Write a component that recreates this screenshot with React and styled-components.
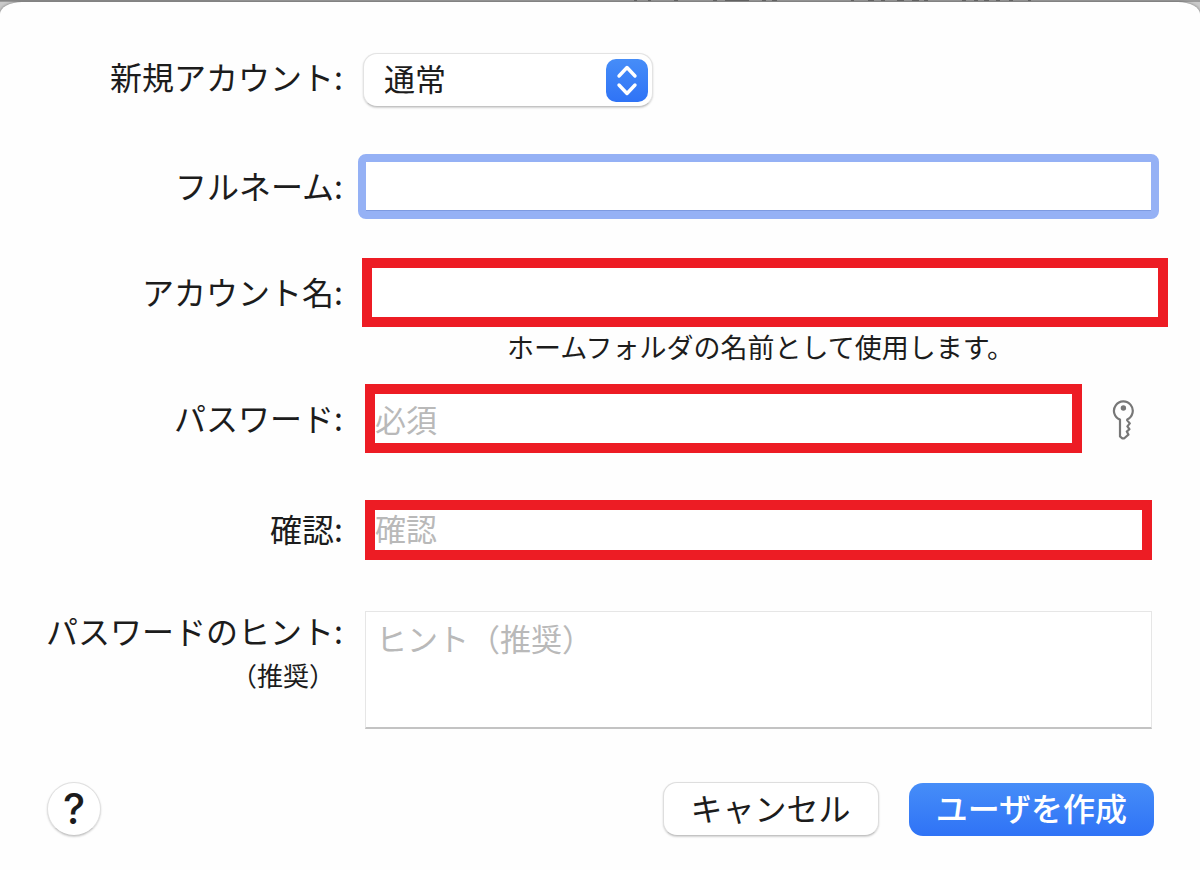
import React from "react";
import styled, { createGlobalStyle, css } from "styled-components";

const GlobalStyle = createGlobalStyle`
  * {
    box-sizing: border-box;
  }
  body {
    margin: 0;
    background-color: #fff;
    font-family: "Noto Sans CJK JP", "Noto Sans", sans-serif;
    color: #1c1c1c;
  }
  input,
  select,
  textarea,
  button {
    font-family: inherit;
    font-size: 31px;
    color: inherit;
    margin: 0;
  }
`;

const Backdrop = styled.div`
  background: linear-gradient(#cacaca, #cacaca 40px, #fff 40px);
`;

const WindowEdge = styled.svg`
  display: block;
  width: 100%;
  height: 2px;
  background-color: #9b9b9b;
`;

const Sheet = styled.form`
  display: flex;
  flex-flow: column nowrap;
  min-height: calc(100vh - 2px);
  padding: 51px 48px 34px 0;
  background-color: #fefefe;
  border-radius: 22px 22px 0 0 / 12px 12px 0 0;
  box-shadow: 0 0 3px rgba(0, 0, 0, 0.45);
`;

const Row = styled.div`
  display: grid;
  grid-template-columns: 343px minmax(0, 1fr);
  column-gap: 22px;
  align-items: ${({ $top }) => ($top ? "start" : "center")};
  margin-top: ${({ $space }) => $space || 0}px;
`;

const Label = styled.label`
  padding-bottom: ${({ $raised }) => ($raised ? 8 : 4)}px;
  font-size: 32px;
  line-height: 38px;
  text-align: right;
  white-space: nowrap;
`;

const SubLabel = styled.span`
  display: block;
  font-size: 26px;
  line-height: 52px;
  padding-right: 8px;
`;

const fieldRing = {
  focus: css`
    height: 65px;
    width: calc(100% + 14px);
    margin: 0 -7px;
    border: 8px solid #95b1f5;
    border-radius: 8px;
    box-shadow: inset 0 -1px 0 #7d9ae0;
  `,
  marked: css`
    border: 10px solid #ed1c24;
  `,
};

const Field = styled.input`
  display: block;
  width: 100%;
  height: 69px;
  padding: 0;
  border-radius: 0;
  background-color: #fff;
  outline: none;
  ${({ $ring }) => fieldRing[$ring]}
  ${({ $short }) =>
    $short &&
    css`
      height: 60px;
      line-height: 34px;
      padding-bottom: 6px;
    `}
  ${({ $wide }) =>
    $wide &&
    css`
      width: calc(100% + 19px);
      margin: 0 -16px 0 -3px;
    `}
  &::placeholder {
    color: #b9b9b9;
    opacity: 1;
  }
`;

const Note = styled.p`
  grid-column: 2;
  margin: 0;
  padding-left: 4px;
  height: 57px;
  font-size: 27px;
  line-height: 40px;
  text-align: center;
  white-space: nowrap;
`;

const WithKey = styled.div`
  display: flex;
  align-items: center;
  gap: 30px;
  padding-right: 17px;
`;

const KeyButton = styled.button`
  display: flex;
  flex: none;
  padding: 2px 0 0;
  border: 0;
  background: none;
`;

const SelectBox = styled.div`
  position: relative;
  width: 290px;
  margin-left: -2px;
`;

const Select = styled.select`
  appearance: none;
  display: block;
  width: 100%;
  height: 54px;
  padding: 0 60px 6px 20px;
  border: 1px solid #e3e3e3;
  border-bottom-color: #c4c4c4;
  border-radius: 14px;
  background-color: #fff;
  box-shadow: 0 1px 2px rgba(0, 0, 0, 0.18);
  outline: none;
`;

const Stepper = styled.svg`
  position: absolute;
  top: 6px;
  right: 5px;
  pointer-events: none;
`;

const HintArea = styled.textarea`
  display: block;
  width: 100%;
  height: 118px;
  padding: 6px 10px;
  line-height: 40px;
  border: 1px solid #e6e6e6;
  border-bottom: 2px solid #c3c3c3;
  border-radius: 0;
  background-color: #fff;
  resize: none;
  outline: none;
  &::placeholder {
    color: #b9b9b9;
    opacity: 1;
  }
`;

const Footer = styled.div`
  display: flex;
  align-items: center;
  gap: 30px;
  margin: 53px -2px 0 47px;
`;

const HelpButton = styled.button`
  width: 54px;
  height: 54px;
  margin-right: auto;
  padding: 0;
  border: 1px solid #e0e0e0;
  border-bottom-color: #c8c8c8;
  border-radius: 50%;
  background-color: #fff;
  box-shadow: 0 1px 2px rgba(0, 0, 0, 0.18);
  font-family: Inter, sans-serif;
  font-size: 42px;
  font-weight: 500;
  line-height: 52px;
`;

const Button = styled.button`
  height: 54px;
  padding: 0 27px 4px;
  border: 1px solid #dedede;
  border-bottom-color: #c4c4c4;
  border-radius: 14px;
  background-color: #fff;
  box-shadow: 0 1px 2px rgba(0, 0, 0, 0.18);
  font-size: 32px;
  line-height: 46px;
  white-space: nowrap;
  ${({ $primary }) =>
    $primary &&
    css`
      border: 0;
      height: 53px;
      background: linear-gradient(#468df8, #2f73f6);
      box-shadow: none;
      color: #fff;
      font-weight: 500;
    `}
`;

// bottoms of the title text that peek out above the sheet
const titleBits = [
  [634, 3], [648, 3], [674, 4], [713, 4], [725, 24], [762, 4], [772, 5],
  [851, 3], [868, 6], [881, 4], [897, 7], [912, 7], [924, 4], [962, 4],
  [974, 4], [984, 5], [996, 4], [1009, 4], [1028, 3],
];

function KeyIcon() {
  return (
    <svg width="23" height="40" viewBox="0 0 23 40" fill="none">
      <path
        d="M8 19.6A9.4 9.4 0 1 1 15.2 19.4V20.4L17.8 23.4L15.4 26.4L17.4 29.2L14.8 31.6L16.4 34.6L12.6 38Q11.2 39 9.8 38L8 36.4Z"
        stroke="#777"
        strokeWidth="2.2"
        strokeLinejoin="round"
      />
      <circle cx="11.4" cy="8" r="2.7" fill="#777" />
    </svg>
  );
}

export default function App() {
  return (
    <Backdrop>
      <GlobalStyle />
      <WindowEdge aria-hidden="true">
        <rect width="220" height="1" fill="#858585" />
        {titleBits.map(([x, width]) => (
          <rect key={x} x={x} width={width} height="1" fill="#626262" />
        ))}
      </WindowEdge>
      <Sheet onSubmit={(e) => e.preventDefault()}>
        <Row>
          <Label htmlFor="account-type" $raised>
            新規アカウント:
          </Label>
          <SelectBox>
            <Select id="account-type">
              <option>通常</option>
            </Select>
            <Stepper width="42" height="43" viewBox="0 0 42 43" fill="none">
              <defs>
                <linearGradient id="blue" x1="0" y1="0" x2="0" y2="1">
                  <stop stopColor="#468df8" />
                  <stop offset="1" stopColor="#2f73f6" />
                </linearGradient>
              </defs>
              <rect width="42" height="43" rx="10" fill="url(#blue)" />
              <path
                d="M13 17L21 8.5L29 17M13 26L21 34.5L29 26"
                stroke="#fff"
                strokeWidth="3.4"
                strokeLinecap="round"
                strokeLinejoin="round"
              />
            </Stepper>
          </SelectBox>
        </Row>
        <Row $space={47}>
          <Label htmlFor="full-name">フルネーム:</Label>
          <Field id="full-name" type="text" $ring="focus" />
        </Row>
        <Row $space={39}>
          <Label htmlFor="account-name">アカウント名:</Label>
          <Field id="account-name" type="text" $ring="marked" $wide />
          <Note>ホームフォルダの名前として使用します。</Note>
        </Row>
        <Row>
          <Label htmlFor="password">パスワード:</Label>
          <WithKey>
            <Field
              id="password"
              type="password"
              placeholder="必須"
              $ring="marked"
            />
            <KeyButton type="button" aria-label="パスワードアシスタント">
              <KeyIcon />
            </KeyButton>
          </WithKey>
        </Row>
        <Row $space={47}>
          <Label htmlFor="confirm">確認:</Label>
          <Field
            id="confirm"
            type="password"
            placeholder="確認"
            $ring="marked"
            $short
          />
        </Row>
        <Row $space={51} $top>
          <Label htmlFor="hint">
            パスワードのヒント:
            <SubLabel>（推奨）</SubLabel>
          </Label>
          <HintArea id="hint" placeholder="ヒント（推奨）" />
        </Row>
        <Footer>
          <HelpButton type="button" aria-label="ヘルプ">
            ?
          </HelpButton>
          <Button type="button">キャンセル</Button>
          <Button type="submit" $primary>
            ユーザを作成
          </Button>
        </Footer>
      </Sheet>
    </Backdrop>
  );
}
